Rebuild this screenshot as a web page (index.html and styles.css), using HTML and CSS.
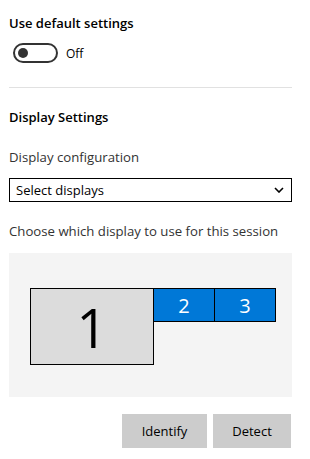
FILE: index.html
```html
<!DOCTYPE html>
<html lang="en">
<head>
    <meta charset="UTF-8">
    <meta name="viewport" content="width=device-width, initial-scale=1.0">
    <title>Display Settings</title>
    <link rel="stylesheet" href="styles.css">
</head>
<body>
    <div class="settings">
        <h2 class="section-title">Use default settings</h2>
        <div class="toggle-row">
            <div class="toggle"><div class="knob"></div></div>
            <span class="toggle-label">Off</span>
        </div>

        <hr class="divider">

        <h2 class="section-title">Display Settings</h2>
        <label class="field-label config-label">Display configuration</label>
        <div class="select-box">
            <span>Select displays</span>
            <svg class="chevron" width="10" height="6" viewBox="0 0 10 6">
                <path d="M1 1 L5 5 L9 1" fill="none" stroke="#000" stroke-width="1.6"/>
            </svg>
        </div>

        <p class="field-label hint">Choose which display to use for this session</p>

        <div class="monitor-panel">
            <div class="monitors">
                <div class="monitor primary">1</div>
                <div class="monitor secondary">2</div>
                <div class="monitor secondary">3</div>
            </div>
        </div>

        <div class="actions">
            <button class="btn identify">Identify</button>
            <button class="btn detect">Detect</button>
        </div>
    </div>
</body>
</html>
```

FILE: styles.css
```css
body {
    margin: 0;
    padding: 0;
    background: #ffffff;
    font-family: "Open Sans", "Noto Sans", sans-serif;
    color: #333333;
}

.settings {
    width: 283px;
    padding: 14px 0 0 9px;
    display: flex;
    flex-direction: column;
}

.section-title {
    margin: 0;
    font-size: 13px;
    font-weight: 600;
    color: #000000;
    line-height: 18px;
}

.toggle-row {
    display: flex;
    align-items: center;
    gap: 8px;
    margin: 11px 0 0 4px;
    height: 20px;
}

.toggle {
    width: 38px;
    height: 16px;
    border: 2px solid #333333;
    border-radius: 10px;
    display: flex;
    align-items: center;
    padding-left: 3px;
    box-sizing: content-box;
}

.knob {
    width: 10px;
    height: 10px;
    border-radius: 50%;
    background: #333333;
}

.toggle-label {
    font-size: 12px;
    color: #000000;
}

.divider {
    border: none;
    border-top: 1px solid #e1e1e1;
    margin: 24px 0 20px 0;
    width: 283px;
}

.field-label {
    display: block;
    margin: 0;
    font-size: 13.2px;
    line-height: 18px;
    color: #333333;
}

.config-label {
    margin: 22px 0 12px 0;
}

.select-box {
    height: 22px;
    border: 1px solid #000000;
    display: flex;
    align-items: center;
    justify-content: space-between;
    padding: 0 6px 0 6px;
    font-size: 13px;
    color: #000000;
}

.chevron {
    margin-right: 1px;
}

.hint {
    margin: 20px 0 13px 0;
}

.monitor-panel {
    background: #f4f4f4;
    height: 144px;
    padding: 35px 0 0 21px;
    box-sizing: border-box;
}

.monitors {
    display: flex;
    align-items: flex-start;
}

.monitor {
    border: 1px solid #000000;
    display: flex;
    align-items: center;
    justify-content: center;
    font-family: "Open Sans", sans-serif;
}

.primary {
    width: 122px;
    height: 75px;
    background: #dcdcdc;
    font-size: 54px;
    font-weight: 400;
    color: #000000;
}

.secondary {
    width: 60px;
    height: 32px;
    margin-left: -1px;
    background: #0078d7;
    color: #ffffff;
    font-size: 20px;
}

.actions {
    display: flex;
    justify-content: flex-end;
    gap: 6px;
    margin: 17px 1px 0 0;
}

.btn {
    height: 34px;
    border: none;
    background: #cccccc;
    font-family: "Open Sans", sans-serif;
    font-size: 13px;
    color: #000000;
    padding: 0;
}

.identify {
    width: 85px;
}

.detect {
    width: 78px;
}
```
